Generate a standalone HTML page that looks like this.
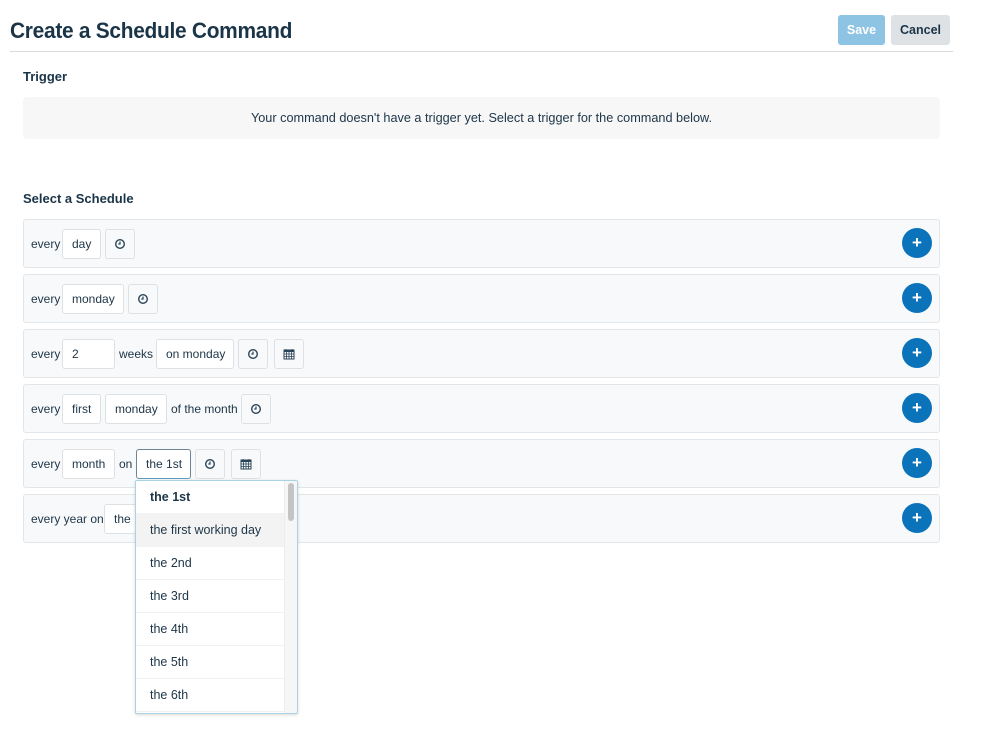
<!DOCTYPE html>
<html><head><meta charset="utf-8"><style>
*{box-sizing:border-box;margin:0;padding:0}
body{width:998px;height:732px;background:#fff;font-family:"Liberation Sans",sans-serif;color:#1d3547;position:relative;overflow:hidden}
.a{position:absolute}
h1{position:absolute;left:10px;top:18px;font-size:22px;font-weight:bold;color:#1a3448;letter-spacing:-0.3px;transform:scaleX(0.95);transform-origin:left;white-space:nowrap}
.hr{left:10px;top:51px;width:943px;height:1px;background:#d8dadc}
.btn{top:15px;height:30px;border-radius:3px;font-size:12.5px;font-weight:bold;text-align:center;line-height:31px}
.lbl{font-size:13px;font-weight:bold;color:#1a3448}
.trig{left:23px;top:97px;width:917px;height:42px;background:#f7f7f7;border-radius:4px;font-size:12.7px;text-align:center;line-height:43px}
.row{left:23px;width:917px;height:49px;background:#f8f9fa;border:1px solid #e3e6e8;border-radius:3px}
.t{font-size:12px;line-height:30px;top:9px}
.box{top:9px;height:30px;background:#fff;border:1px solid #dde1e4;border-radius:3px;font-size:12px;line-height:29px;padding-left:9px}
.ib{top:9px;height:30px;width:30px;background:#f8f9fa;border:1px solid #dde1e4;border-radius:3px}
.ib svg{position:absolute;left:8px;top:8px}
.plus{right:7px;top:8px;width:30px;height:30px;border-radius:50%;background:#0a73ba;color:#fff;font-weight:bold;font-size:17px;text-align:center;line-height:30px}
.dd{left:135px;top:480px;width:163px;height:234px;background:#fff;border:1px solid #a9d2e4;border-radius:2px;box-shadow:0 1px 3px rgba(0,0,0,.15);overflow:hidden}
.it{height:33px;line-height:33px;padding-left:14px;font-size:12.5px;border-bottom:1px solid #f1f2f3;width:150px}
.sb{position:absolute;right:0;top:0;width:13px;height:100%;background:#f6f6f6;border-left:1px solid #ececec}
.th{position:absolute;left:3px;top:2px;width:6px;height:38px;background:#c4c4c4;border-radius:3px}
</style></head><body>
<h1>Create a Schedule Command</h1>
<div class="a hr"></div>
<div class="a btn" style="left:838px;width:47px;background:#8dc3e3;color:#fff">Save</div>
<div class="a btn" style="left:891px;width:59px;background:#dfe2e5;color:#1a3448">Cancel</div>
<div class="a lbl" style="left:23px;top:69px">Trigger</div>
<div class="a trig">Your command doesn't have a trigger yet. Select a trigger for the command below.</div>
<div class="a lbl" style="left:23px;top:191px">Select a Schedule</div>

<svg width="0" height="0" style="position:absolute"><defs>
<symbol id="clk" viewBox="0 0 12 12"><circle cx="6" cy="6" r="4.3" fill="none" stroke="#2b4558" stroke-width="1.4"/><path d="M6 3.5V6H4.3" fill="none" stroke="#2b4558" stroke-width="1.2"/></symbol>
<symbol id="cal" viewBox="0 0 12 12"><rect x="1" y="2" width="10" height="9" fill="none" stroke="#2b4558" stroke-width="1"/><rect x="1" y="2" width="10" height="2" fill="#2b4558"/><path d="M3 1v2M9 1v2M1 6h10M1 8.5h10M3.5 4v7M6 4v7M8.5 4v7" stroke="#2b4558" stroke-width="0.8"/></symbol>
</defs></svg>

<div class="a row" style="top:219px">
<div class="a t" style="left:7px">every</div>
<div class="a box" style="left:38px;width:39px">day</div>
<div class="a ib" style="left:81px"><svg width="12" height="12"><use href="#clk"/></svg></div>
<div class="a plus">+</div></div>

<div class="a row" style="top:274px">
<div class="a t" style="left:7px">every</div>
<div class="a box" style="left:38px;width:62px">monday</div>
<div class="a ib" style="left:104px"><svg width="12" height="12"><use href="#clk"/></svg></div>
<div class="a plus">+</div></div>

<div class="a row" style="top:329px">
<div class="a t" style="left:7px">every</div>
<div class="a box" style="left:38px;width:53px">2</div>
<div class="a t" style="left:95px">weeks</div>
<div class="a box" style="left:132px;width:78px">on monday</div>
<div class="a ib" style="left:214px"><svg width="12" height="12"><use href="#clk"/></svg></div>
<div class="a ib" style="left:250px"><svg width="12" height="12"><use href="#cal"/></svg></div>
<div class="a plus">+</div></div>

<div class="a row" style="top:384px">
<div class="a t" style="left:7px">every</div>
<div class="a box" style="left:38px;width:39px">first</div>
<div class="a box" style="left:81px;width:62px">monday</div>
<div class="a t" style="left:147px">of the month</div>
<div class="a ib" style="left:217px"><svg width="12" height="12"><use href="#clk"/></svg></div>
<div class="a plus">+</div></div>

<div class="a row" style="top:439px">
<div class="a t" style="left:7px">every</div>
<div class="a box" style="left:38px;width:53px">month</div>
<div class="a t" style="left:95px">on</div>
<div class="a box" style="left:112px;width:55px;border-color:#6f8494;border-bottom-color:#5a9cc0">the 1st</div>
<div class="a ib" style="left:171px"><svg width="12" height="12"><use href="#clk"/></svg></div>
<div class="a ib" style="left:207px"><svg width="12" height="12"><use href="#cal"/></svg></div>
<div class="a plus">+</div></div>

<div class="a row" style="top:494px">
<div class="a t" style="left:7px">every year on</div>
<div class="a box" style="left:80px;width:60px">the</div>
<div class="a plus">+</div></div>

<div class="a dd">
<div class="it" style="font-weight:bold">the 1st</div>
<div class="it" style="background:#f3f3f3">the first working day</div>
<div class="it">the 2nd</div>
<div class="it">the 3rd</div>
<div class="it">the 4th</div>
<div class="it">the 5th</div>
<div class="it">the 6th</div>
<div class="sb"><div class="th"></div></div>
</div>
</body></html>
